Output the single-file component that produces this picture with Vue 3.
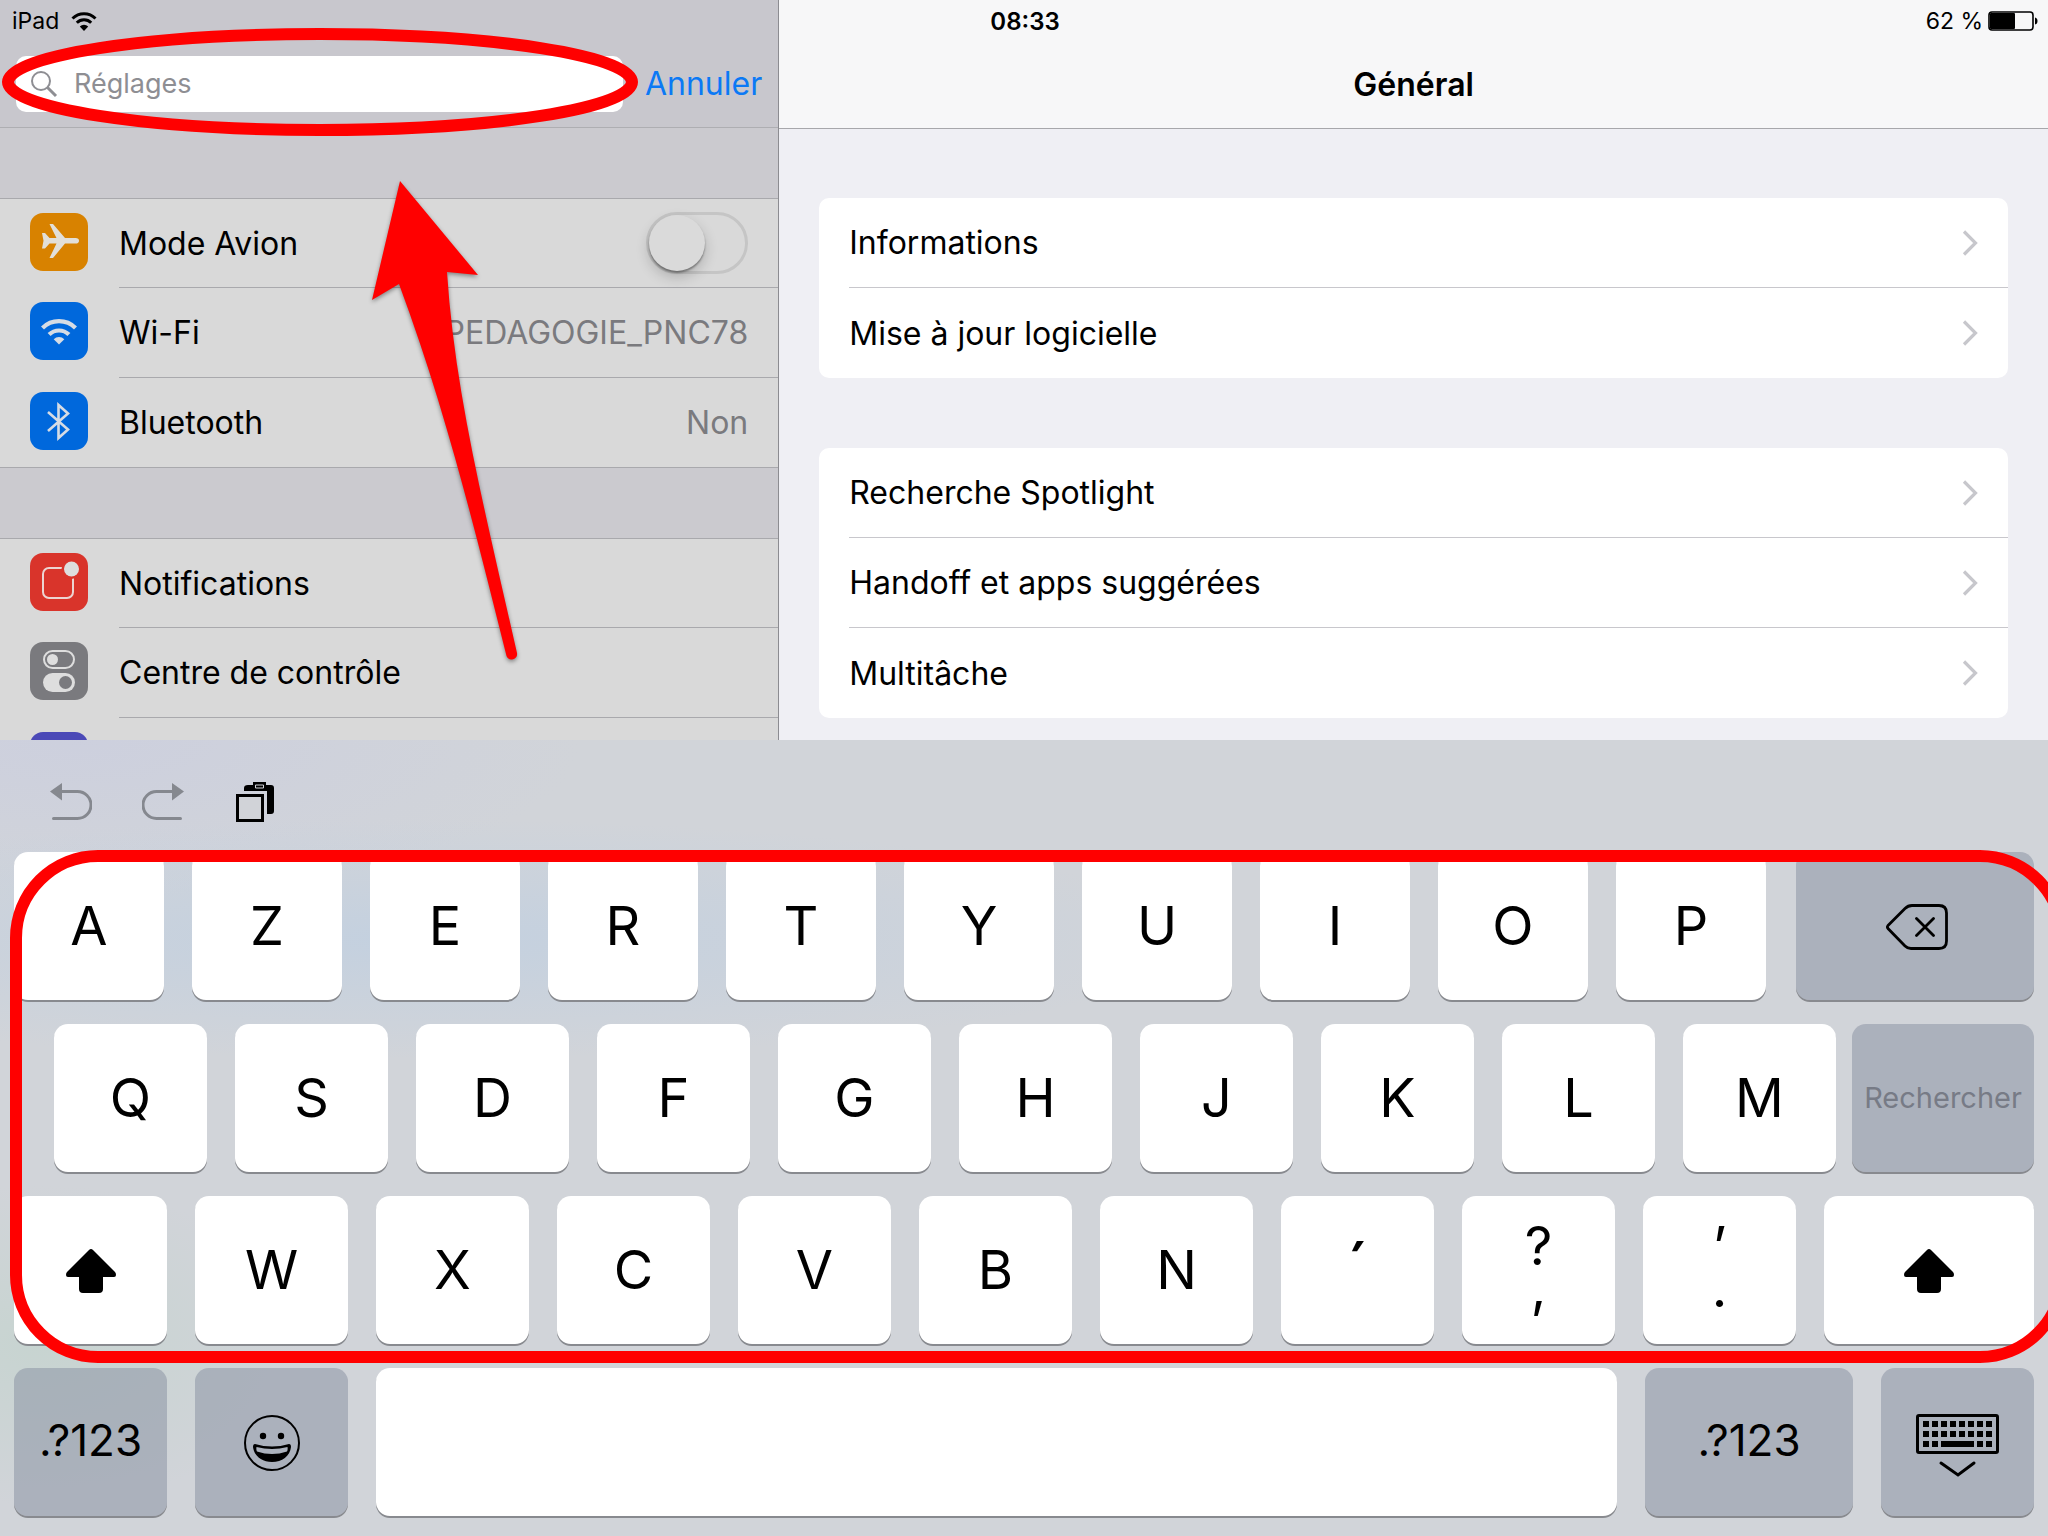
<template>
  <div class="screen">
    <header class="status-bar">
      <div class="status-left">
        <span>iPad</span>
        <svg class="status-wifi" viewBox="0 0 26 20" aria-hidden="true">
          <path d="M1.5 7.5a16.3 16.3 0 0 1 23 0M5.8 11.8a10.2 10.2 0 0 1 14.4 0" fill="none" stroke="#000" stroke-width="3" />
          <path d="M13 20l-4.2-4.6a6 6 0 0 1 8.4 0z" />
        </svg>
      </div>
      <time class="status-time">08:33</time>
      <div class="status-right">
        <span>62 %</span>
        <svg class="battery" viewBox="0 0 50 20" aria-hidden="true">
          <rect x="1" y="1" width="44" height="18" rx="3" fill="none" stroke="#000" stroke-width="1.6" />
          <rect x="2" y="2" width="25" height="16" rx="1" />
          <path d="M47 6.5q2.5 .5 2.5 3.500t-2.500 3.500z" />
        </svg>
      </div>
    </header>

    <div class="panes">
      <!-- Colonne de gauche -->
      <aside class="sidebar">
        <form class="search-bar" @submit.prevent>
          <label class="search-field">
            <svg class="search-icon" viewBox="0 0 28 28" aria-hidden="true">
              <circle cx="11" cy="11" r="9" fill="none" stroke="#8e8e93" stroke-width="2" />
              <path d="M17.500 17.500l8.500 8.500" stroke="#8e8e93" stroke-width="3" />
            </svg>
            <input v-model="query" type="search" class="search-input" placeholder="Réglages" aria-label="Réglages" />
          </label>
          <button type="button" class="cancel" @click="query = ''">Annuler</button>
          <svg class="mark-ellipse" viewBox="0 0 640 110" aria-hidden="true">
            <ellipse cx="320" cy="55" rx="312" ry="48" fill="none" stroke="#f00" stroke-width="12" />
          </svg>
        </form>

        <div v-for="(group, g) in menu" :key="g" class="menu-group">
          <component
            :is="item.toggle ? 'label' : 'a'"
            v-for="item in group"
            :key="item.icon"
            class="menu-row"
            :href="item.toggle ? null : '#' + item.icon"
          >
            <svg class="menu-icon" viewBox="0 0 58 58" aria-hidden="true">
              <rect width="58" height="58" rx="13" :fill="item.color" />
              <path
                v-if="item.icon === 'avion'"
                d="M12 20h3l4.500 5h7L19.500 11H23l12 14h10.500q3.500 0 3.500 2.800t-3.500 2.800H35L23 45h-3.500l7-14.400h-7l-4.500 5h-3l1.500-7.800z"
                fill="#e2dfd8"
              />
              <g v-else-if="item.icon === 'wifi'">
                <path
                  d="M12.500 26a23.300 23.300 0 0 1 33 0M19.100 32.600a14 14 0 0 1 19.800 0"
                  fill="none"
                  stroke="#d6dce4"
                  stroke-width="4.200"
                />
                <path d="M29 42.500l-5.300-5.300a7.500 7.500 0 0 1 10.600 0z" fill="#d6dce4" />
              </g>
              <path
                v-else-if="item.icon === 'bluetooth'"
                d="M18 20l20 17.500-9.500 8.500V13l9.500 8.500L18 39"
                fill="none"
                stroke="#d6dce4"
                stroke-width="2.600"
              />
              <g v-else-if="item.icon === 'notifications'">
                <rect x="13" y="15" width="30" height="30" rx="6" fill="none" stroke="#ecd4d2" stroke-width="2" />
                <circle cx="41.500" cy="16" r="10" :fill="item.color" />
                <circle cx="41.500" cy="16" r="7.500" fill="#dedede" />
              </g>
              <g v-else-if="item.icon === 'controle'">
                <rect x="14" y="9" width="30" height="17" rx="8.500" fill="none" stroke="#dedede" stroke-width="2" />
                <circle cx="22.500" cy="17.500" r="5.500" fill="#dedede" />
                <rect x="13" y="31" width="32" height="19" rx="9.500" fill="#dedede" />
                <circle cx="35.500" cy="40.500" r="6.500" :fill="item.color" />
              </g>
            </svg>
            <span class="menu-body">
              <span class="menu-label">{{ item.label }}</span>
              <input v-if="item.toggle" v-model="airplane" type="checkbox" class="switch" />
              <span v-else-if="item.value" class="menu-value">{{ item.value }}</span>
            </span>
          </component>
        </div>

        <svg class="mark-arrow" viewBox="0 0 160 490" aria-hidden="true">
          <path
            d="M35 6L113 100 82 97C90 220 121 340 152 478A5.500 5.500 0 0 1 141.500 481C112 364 82 238 34 109L7 125z"
            fill="#f00"
          />
        </svg>
      </aside>

      <!-- Contenu de droite -->
      <main class="detail">
        <div class="detail-head">
          <h1 class="detail-title">Général</h1>
        </div>
        <nav v-for="(card, c) in cards" :key="c" class="card">
          <a v-for="name in card" :key="name" href="#general" class="card-row">
            <span>{{ name }}</span>
            <svg class="chevron" viewBox="0 0 16 26" aria-hidden="true">
              <path d="M2 1.500L13.500 13 2 24.500" fill="none" stroke="#c7c7cc" stroke-width="3.200" />
            </svg>
          </a>
        </nav>
      </main>
    </div>

    <!-- Clavier AZERTY -->
    <section class="keyboard" aria-label="Clavier">
      <div class="tools">
        <button type="button" class="tool" aria-label="Annuler la saisie">
          <svg viewBox="0 0 42 42" aria-hidden="true">
            <path d="M10 11.500h17.500a13.500 13.500 0 0 1 0 27H3.500" fill="none" stroke="#85888f" stroke-width="3" stroke-linecap="round" />
            <path d="M0 11.500L12 3v17.500z" fill="#85888f" />
          </svg>
        </button>
        <button type="button" class="tool" aria-label="Rétablir la saisie">
          <svg viewBox="0 0 42 42" aria-hidden="true">
            <path d="M32 11.500H14.500a13.500 13.500 0 0 0 0 27h24" fill="none" stroke="#85888f" stroke-width="3" stroke-linecap="round" />
            <path d="M42 11.500L30 3v17.500z" fill="#85888f" />
          </svg>
        </button>
        <button type="button" class="tool" aria-label="Coller">
          <svg viewBox="0 0 42 42" aria-hidden="true">
            <path d="M10 11V8q0-3 4-3h5V2h13v3h5q3 0 3 3v23q0 3-3 3h-4V11z" />
            <path d="M21.500 5h8v3h-8z" fill="none" stroke="#d1d3d8" />
            <rect x="3.500" y="15.500" width="25" height="25" fill="#d1d3d8" stroke="#000" stroke-width="3" />
          </svg>
        </button>
      </div>

      <div class="key-row row-top">
        <div class="key-block">
          <button v-for="k in 'AZERTYUIOP'" :key="k" type="button" class="key">{{ k }}</button>
        </div>
        <button type="button" class="key key-dark key-delete" aria-label="Supprimer">
          <svg class="icon-delete" viewBox="0 0 62 46" aria-hidden="true">
            <path
              d="M2 21.500L19 4.500Q22 1.500 26 1.500H53Q60.500 1.500 60.500 9V37Q60.500 44.500 53 44.500H25Q21.500 44.500 19 42L2 24.500Q.8 23 2 21.500zM30.500 14.500l17 17M47.500 14.500l-17 17"
              fill="none"
              stroke="#000"
              stroke-width="2.800"
              stroke-linecap="round"
            />
          </svg>
        </button>
      </div>

      <div class="key-row row-home">
        <div class="key-block">
          <button v-for="k in 'QSDFGHJKLM'" :key="k" type="button" class="key">{{ k }}</button>
        </div>
        <button type="button" class="key key-dark key-search" disabled>Rechercher</button>
      </div>

      <div class="key-row">
        <div class="key-block">
          <button type="button" class="key" aria-label="Majuscule">
            <svg class="icon-shift" viewBox="0 0 50 44" aria-hidden="true"><path :d="shiftPath" /></svg>
          </button>
          <button v-for="k in 'WXCVBN'" :key="k" type="button" class="key">{{ k }}</button>
          <button type="button" class="key key-accent">´</button>
          <button v-for="k in doubleKeys" :key="k" type="button" class="key key-double">{{ k }}</button>
        </div>
        <button type="button" class="key key-shift" aria-label="Majuscule">
          <svg class="icon-shift" viewBox="0 0 50 44" aria-hidden="true"><path :d="shiftPath" /></svg>
        </button>
      </div>

      <div class="key-row">
        <button type="button" class="key key-dark key-text key-small">.?123</button>
        <button type="button" class="key key-dark key-small" aria-label="Emoji">
          <svg class="icon-emoji" viewBox="0 0 58 58" aria-hidden="true">
            <circle cx="29" cy="29" r="27" fill="none" stroke="#000" stroke-width="2" />
            <circle cx="20" cy="22" r="3.200" />
            <circle cx="38" cy="22" r="3.200" />
            <path
              d="M12 30Q29 35 46 30 48 30 48 33C47 42 39 48 29 48S11 42 10 33Q10 30 12 30zM13.500 33Q13 36 14 37.500 29 42.500 44 37.500 45 36 44.500 33 29 37 13.500 33z"
              fill-rule="evenodd"
            />
          </svg>
        </button>
        <button type="button" class="key key-space" aria-label="Espace"></button>
        <button type="button" class="key key-dark key-text key-symbols">.?123</button>
        <button type="button" class="key key-dark key-small" aria-label="Masquer le clavier">
          <svg class="icon-hide" viewBox="0 0 84 64" aria-hidden="true">
            <rect x="1.500" y="1.500" width="80" height="37" rx="1.500" fill="none" stroke="#000" stroke-width="3" />
            <path d="M7 10h70M7 20h70" stroke="#000" stroke-width="6" stroke-dasharray="6 3" />
            <path d="M7 30h18M61 30h18" stroke="#000" stroke-width="6" stroke-dasharray="6 3" />
            <path d="M25 30h33" stroke="#000" stroke-width="6" />
            <path d="M25 49l17 12 16-12" fill="none" stroke="#000" stroke-width="3" stroke-linecap="round" />
          </svg>
        </button>
      </div>

      <div class="mark-frame"></div>
    </section>
  </div>
</template>

<script setup>
import { ref } from 'vue'

const query = ref('')
const airplane = ref(false)

const menu = [
  [
    { icon: 'avion', label: 'Mode Avion', color: '#d88200', toggle: true },
    { icon: 'wifi', label: 'Wi-Fi', color: '#0068dc', value: 'PEDAGOGIE_PNC78' },
    { icon: 'bluetooth', label: 'Bluetooth', color: '#0068dc', value: 'Non' },
  ],
  [
    { icon: 'notifications', label: 'Notifications', color: '#d9342b' },
    { icon: 'controle', label: 'Centre de contrôle', color: '#7a7a7e' },
    { icon: 'suite', label: '', color: '#4b49b7' },
  ],
]

const cards = [
  ['Informations', 'Mise à jour logicielle'],
  ['Recherche Spotlight', 'Handoff et apps suggérées', 'Multitâche'],
]

// Touches à deux symboles : un par ligne
const doubleKeys = ['?\n,', '’\n.']

const shiftPath =
  'M25 0q1 0 2 1l22 22q1 1 1 3t-2 2H37v12q0 4-4 4H17q-4 0-4-4V28H2q-2 0-2-2t1-3L23 1q1-1 2-1z'
</script>

<style>
body {
  margin: 0;
}
</style>

<style scoped>
.screen {
  position: relative;
  display: flex;
  flex-direction: column;
  height: 100vh;
  overflow: hidden;
  font-family: Inter, 'Liberation Sans', sans-serif;
  font-size: 32px;
  color: #000;
}
.screen *,
.screen *::before {
  box-sizing: border-box;
}
button,
input {
  margin: 0;
  padding: 0;
  border: 0;
  font-family: inherit;
  color: inherit;
  background: none;
}
a {
  color: inherit;
  text-decoration: none;
}
svg {
  display: block;
  flex: none;
}

/* Barre d'état, posée au-dessus des deux colonnes */
.status-bar {
  position: absolute;
  top: 0;
  left: 0;
  right: 0;
  z-index: 2;
  display: grid;
  grid-template-columns: 1fr auto 1fr;
  align-items: center;
  height: 42px;
  padding: 0 10px 0 12px;
  font-size: 23px;
}
.status-left,
.status-right {
  display: flex;
  align-items: center;
  gap: 12px;
}
.status-right {
  justify-content: flex-end;
  gap: 5px;
}
.status-wifi {
  width: 26px;
  height: 20px;
}
.status-time {
  font-size: 24px;
  font-weight: 600;
}
.battery {
  width: 50px;
  height: 20px;
}

.panes {
  display: flex;
  flex: 1;
  min-height: 0;
}

/* --- Colonne de gauche --- */
.sidebar {
  position: relative;
  width: calc(38% + 1px);
  overflow: hidden;
  border-right: 1px solid #8c8c91;
  background: #cbcacf;
}
.search-bar {
  position: relative;
  display: flex;
  align-items: center;
  gap: 22px;
  height: 128px;
  margin-bottom: 70px;
  padding: 40px 16px 0 16px;
  border-bottom: 1px solid #aeaeb2;
  background: #c8c7cd;
}
.search-field {
  display: flex;
  flex: 1;
  align-items: center;
  gap: 16px;
  height: 56px;
  padding: 0 14px;
  border-radius: 10px;
  background: #fff;
}
.search-icon {
  width: 28px;
  height: 28px;
}
.search-input {
  flex: 1;
  min-width: 0;
  outline: none;
  font-size: 27px;
}
.search-input::placeholder {
  color: #8e8e93;
}
.cancel {
  font-size: 32px;
  color: #0b79f5;
}
.menu-group {
  margin-bottom: 70px;
  border-top: 1px solid #a9a9ad;
  border-bottom: 1px solid #a9a9ad;
  background: #d9d9d9;
}
.menu-row {
  display: flex;
  align-items: center;
  gap: 31px;
  height: 90px;
  padding-left: 30px;
}
.menu-row:first-child,
.menu-row:last-child {
  height: 89px;
}
.menu-icon {
  width: 58px;
  height: 58px;
  margin-bottom: 4px;
}
.menu-body {
  display: flex;
  flex: 1;
  align-items: center;
  justify-content: space-between;
  height: 100%;
  padding-right: 30px;
  border-bottom: 1px solid #a9a9ad;
}
.menu-row:last-child .menu-body {
  border-bottom: 0;
}
.menu-value {
  color: #7a7a7e;
}
.switch {
  appearance: none;
  width: 102px;
  height: 62px;
  border: 3px solid #c5c5c5;
  border-radius: 31px;
}
.switch::before {
  content: '';
  display: block;
  width: 56px;
  height: 56px;
  border-radius: 50%;
  background: #dadada;
  box-shadow: 0 6px 14px rgba(0, 0, 0, 0.2), 0 2px 2px rgba(0, 0, 0, 0.35);
}
.switch:checked::before {
  margin-left: 40px;
}

/* --- Contenu de droite --- */
.detail {
  flex: 1;
  overflow: hidden;
  background: #efeff4;
}
.detail-head {
  display: flex;
  align-items: center;
  justify-content: center;
  height: 129px;
  margin-bottom: 69px;
  padding-top: 40px;
  border-bottom: 1px solid #a7a7ab;
  background: #f7f7f8;
}
.detail-title {
  margin: 0;
  font-size: 32px;
  font-weight: 600;
}
.card {
  margin: 0 40px 70px;
  padding-left: 30px;
  border-radius: 10px;
  background: #fff;
}
.card-row {
  display: flex;
  align-items: center;
  justify-content: space-between;
  height: 90px;
  padding-right: 30px;
  border-bottom: 1px solid #c8c7cc;
}
.card-row:last-child {
  border-bottom: 0;
}
.chevron {
  width: 16px;
  height: 26px;
}

/* --- Clavier --- */
.keyboard {
  position: relative;
  display: flex;
  flex-direction: column;
  gap: 24px;
  padding: 0 14px 20px;
  background:
    radial-gradient(ellipse 800px 120px at 20% 25%, rgba(190, 207, 226, 0.7), transparent),
    radial-gradient(ellipse 260px 160px at 2% 76%, rgba(195, 212, 205, 0.7), transparent),
    radial-gradient(ellipse 500px 160px at 4% 0%, rgba(203, 206, 224, 0.7), transparent),
    #d1d4d9;
}
.tools {
  display: flex;
  align-items: center;
  gap: 50px;
  height: 112px;
  margin-bottom: -24px;
  padding: 10px 36px 0;
}
.tool,
.tool svg {
  width: 42px;
  height: 42px;
}
.key-row {
  display: flex;
  gap: 28px;
}
.key-block {
  display: flex;
  flex: 1;
  gap: 28px;
}
.key {
  display: flex;
  flex: 1;
  align-items: center;
  justify-content: center;
  min-width: 0;
  height: 148px;
  padding-bottom: 2px;
  border-radius: 14px;
  font-size: 54px;
  background: #fff;
  box-shadow: 0 2px 0 #888a8f;
}
.key svg {
  margin-top: 4px;
}
.key-dark {
  background: rgba(134, 142, 160, 0.5);
}
.row-top {
  gap: 30px;
}
.key-delete {
  flex: 0 0 238px;
  padding-left: 4px;
}
.row-home {
  gap: 16px;
  padding-left: 40px;
}
.key-search {
  flex: 0 0 182px;
  font-size: 29px;
  color: #777b86;
}
.key-shift {
  flex: 0 0 210px;
}
.key-accent {
  font-size: 72px;
}
.key-double {
  padding-bottom: 6px;
  line-height: 42px;
  white-space: pre-line;
}
.key-small {
  flex: 0 0 153px;
}
.key-symbols {
  flex: 0 0 208px;
}
.key-text {
  padding-bottom: 4px;
  font-size: 44px;
}
.icon-delete {
  width: 62px;
  height: 46px;
}
.icon-shift {
  width: 50px;
  height: 44px;
}
.icon-emoji {
  width: 58px;
  height: 58px;
}
.key .icon-hide {
  width: 84px;
  height: 64px;
  margin-top: 10px;
}

/* --- Annotations rouges --- */
.mark-ellipse {
  position: absolute;
  top: 27px;
  left: 0;
  width: 640px;
  height: 110px;
  z-index: 1;
  pointer-events: none;
}
.mark-arrow {
  position: absolute;
  top: 175px;
  left: 365px;
  width: 160px;
  height: 490px;
  filter: drop-shadow(0 2px 2px rgba(0, 0, 0, 0.4));
  pointer-events: none;
}
.mark-frame {
  position: absolute;
  top: 110px;
  right: -20px;
  bottom: 173px;
  left: 10px;
  border: 12px solid #f00;
  border-radius: 88px;
  pointer-events: none;
}
</style>
